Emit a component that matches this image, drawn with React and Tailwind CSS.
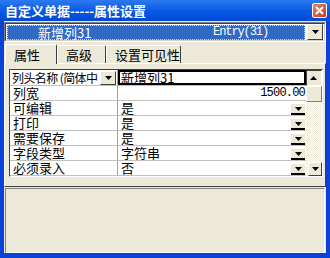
import { useState } from 'react'

const rows = [
  { label: '列宽', value: '1500.00', align: 'right' },
  { label: '可编辑', value: '是', drop: true },
  { label: '打印', value: '是', drop: true },
  { label: '需要保存', value: '是', drop: true },
  { label: '字段类型', value: '字符串', drop: true },
  { label: '必须录入', value: '否', drop: true },
]

function Arrow({ className = '' }) {
  return (
    <svg width="7" height="4" viewBox="0 0 7 4" className={className}>
      <path d="M0 0H7L3.5 4Z" fill="#000" />
    </svg>
  )
}

function DropBtn({ className = '' }) {
  return (
    <div
      className={`flex items-center justify-center bg-[#ECE9D8] border-t border-l border-t-white border-l-white border-r border-b border-r-[#404040] border-b-[#404040] ${className}`}
    >
      <Arrow />
    </div>
  )
}

export default function App() {
  const [tab, setTab] = useState(0)
  const tabs = ['属性', '高级', '设置可见性']

  return (
    <div className="w-[330px] h-[258px] flex flex-col bg-[#0842d6] font-['Noto_Sans_CJK_SC',sans-serif] text-[13px] text-black overflow-hidden">
      {/* Title bar */}
      <div className="h-[21px] flex items-center pl-[5px] pr-[3px] bg-gradient-to-b from-[#2b7af0] via-[#0a5ae6] to-[#0148d4]">
        <span className="text-white font-bold text-[13px] leading-[15px]">
          自定义单据-----属性设置
        </span>
        <div className="ml-auto w-[15px] h-[15px] rounded-[2px] border border-white bg-gradient-to-br from-[#e8866a] to-[#c33b16] flex items-center justify-center">
          <svg width="9" height="9" viewBox="0 0 9 9">
            <path d="M1 1L8 8M8 1L1 8" stroke="#fff" strokeWidth="2" />
          </svg>
        </div>
      </div>

      {/* Body */}
      <div className="flex-1 mx-[4px] mb-[5px] bg-[#ECE9D8] flex flex-col">
        {/* Combo */}
        <div className="mt-[1px] h-[20px] border border-t-[#808080] border-l-[#808080] border-r-white border-b-white">
          <div className="h-full border border-t-[#404040] border-l-[#404040] border-r-[#d4d0c8] border-b-[#d4d0c8] bg-white flex items-center pl-[1px] pr-[1px] gap-[2px]">
            <div className="flex-1 h-[15px] bg-[#316AC5] border border-dotted border-[#c8d6f0] flex items-center text-white leading-[13px]">
              <span className="ml-[30px]">新增列31</span>
              <span className="ml-auto mr-[36px] text-[12px] font-['Liberation_Mono',monospace] tracking-[-1.1px]">Entry(31)</span>
            </div>
            <DropBtn className="w-[16px] h-[16px]" />
          </div>
        </div>

        {/* Tabs */}
        <div className="mt-[1px] h-[20px] flex items-end pl-[1px] relative z-10">
          {tabs.map((t, i) => (
            <div
              key={t}
              onClick={() => setTab(i)}
              className={`flex items-center pl-[8px] border-t border-l border-t-white border-l-white border-r border-r-[#404040] rounded-t-[2px] leading-[14px] ${
                tab === i ? 'h-[20px] -mb-px bg-[#ECE9D8]' : 'h-[18px]'
              } ${i === 0 ? 'w-[52px]' : i === 1 ? 'w-[49px]' : 'w-[75px]'}`}
            >
              {t}
            </div>
          ))}
        </div>

        {/* Tab panel */}
        <div className="h-[124px] border-t border-l border-t-white border-l-white border-r border-b border-r-[#404040] border-b-[#404040] pt-[5px] pl-[4px] pr-[2px]">
          <div className="h-[108px] flex border border-t-[#404040] border-l-[#404040] border-r-white border-b-white">
            <div className="flex-1 bg-white flex flex-col">
              {/* first row */}
              <div className="h-[16px] flex border-b border-[#c0c0c0]">
                <div className="w-[108px] flex items-center pl-[2px] pr-[1px] border-r border-[#a0a0a0] leading-[14px]">
                  <span className="flex-1 whitespace-nowrap overflow-hidden text-[12px] tracking-[-0.6px]">列头名称 (简体中</span>
                  <DropBtn className="w-[16px] h-[14px]" />
                </div>
                <div className="flex-1 border-2 border-black flex items-center pl-[1px] leading-[12px]">
                  新增列31
                </div>
              </div>
              {rows.map((r) => (
                <div key={r.label} className="h-[15px] flex border-b border-[#c0c0c0] leading-[14px]">
                  <div className="w-[108px] flex items-center pl-[3px] border-r border-[#a0a0a0]">{r.label}</div>
                  <div className="flex-1 flex items-center pl-[3px] pr-[1px]">
                    {r.align === 'right' ? (
                      <span className="ml-auto text-[12px] font-['Liberation_Mono',monospace] tracking-[-0.8px]">{r.value}</span>
                    ) : (
                      <span>{r.value}</span>
                    )}
                    {r.drop && (
                      <div className="ml-auto self-end w-[14px] h-[11px] bg-[#ECE9D8] border-b-2 border-black flex items-center justify-center">
                        <Arrow />
                      </div>
                    )}
                  </div>
                </div>
              ))}
            </div>
            {/* scrollbar */}
            <div className="w-[16px] flex flex-col bg-[repeating-conic-gradient(#ffffff_0%_25%,#ECE9D8_0%_50%)] bg-[length:2px_2px]">
              <DropBtn className="h-[16px] rotate-180" />
              <div className="h-[16px] bg-[#ECE9D8] border-t border-l border-t-white border-l-white border-r border-b border-r-[#808080] border-b-[#808080]" />
              <div className="flex-1" />
              <DropBtn className="h-[14px] ml-[2px]" />
            </div>
          </div>
        </div>

        {/* Bottom memo panel */}
        <div className="mt-[1px] flex-1 mx-[1px] border border-t-[#808080] border-l-[#808080] border-r-white border-b-white" />
      </div>
    </div>
  )
}
